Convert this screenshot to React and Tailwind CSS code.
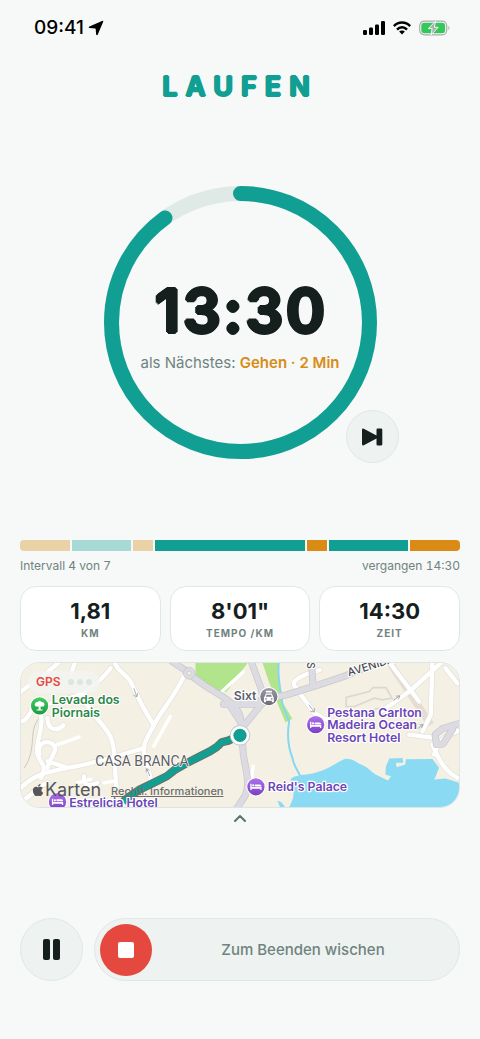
import { FaApple } from "react-icons/fa";

const TOTAL_PROGRESS = 0.9;
const RING_RADIUS = 129;
const RING_LENGTH = 2 * Math.PI * RING_RADIUS;

const intervals = [
  { minutes: 5, color: "bg-[#ebd2a6]" },
  { minutes: 6, color: "bg-[#a7dad4]" },
  { minutes: 2, color: "bg-[#ebd2a6]" },
  { minutes: 15, color: "bg-[#109f92]" },
  { minutes: 2, color: "bg-[#d98b16]" },
  { minutes: 8, color: "bg-[#109f92]" },
  { minutes: 5, color: "bg-[#d98b16]" },
];

const stats = [
  { value: "1,81", label: "KM" },
  { value: "8'01\"", label: "TEMPO /KM" },
  { value: "14:30", label: "ZEIT" },
];

// minor streets, drawn white with a thin casing
const streets = [
  "M310 15 C318 50 345 55 360 80 C375 110 385 140 430 212",
  "M520 65 C490 130 450 170 430 212 C410 250 395 270 402 300 C410 340 420 350 425 400",
  "M205 110 C230 160 260 190 290 230 C320 270 310 350 318 400",
  "M30 400 C80 350 130 350 170 340 C240 330 300 310 402 280",
  "M30 440 C60 430 70 400 110 385",
  "M90 180 C100 230 70 260 80 300 C90 330 110 330 90 370",
  "M110 340 C120 300 150 280 120 265 C90 255 80 280 85 300",
  "M110 190 C110 230 140 230 158 212",
  "M60 170 C50 190 40 200 30 200",
  "M300 40 C270 80 250 90 225 110 C200 130 90 150 60 165",
  "M150 15 C120 50 80 70 30 110",
  "M195 15 L180 60",
  "M220 365 C215 400 240 395 260 385",
  "M110 320 L170 340",
  "M870 115 L915 175 L960 200",
  "M930 45 C840 70 840 90 870 105",
  "M1135 15 L1230 140",
  "M1115 170 L1200 110 L1305 15",
  "M1270 15 L1265 180 L1240 230",
  "M1200 240 L1275 250",
  "M1270 270 C1290 320 1310 350 1345 370",
  "M1345 230 C1320 240 1290 250 1275 300",
  "M1310 40 L1345 85",
];

const lanes = [
  "M480 185 L430 275",
  "M140 270 L205 247",
  "M630 115 L700 50",
  "M200 385 L240 375",
  "M280 385 L310 380",
  "M730 335 L725 370",
];

const mainRoads = [
  "M480 15 C505 35 520 40 537 55 C590 110 680 130 692 190 L700 300 C708 350 722 390 705 425 L675 470",
  "M640 148 L755 148 L700 215",
  "M700 215 L655 145",
  "M722 15 L755 105 L760 145",
  "M740 140 L830 120 L920 92 L1010 62 L1130 15",
  "M905 15 L910 92",
  "M1355 205 L1300 222 L1278 240 L1282 270 L1302 268 L1330 225",
];

const routePath =
  "M338 442 L352 430 L385 407 L430 385 L470 365 L492 347 L525 328 L570 305 L600 290 L620 277 L635 263 L655 258 L690 242";

function StatusBar() {
  return (
    <div className="flex items-center justify-between pt-4 pr-[30px] pl-[34px]">
      <div className="flex items-center gap-1">
        <span className="text-[19px] leading-6 font-medium text-black">09:41</span>
        <svg viewBox="0 0 16 16" className="size-4">
          <path
            d="M15.200 1.800 L9.800 14.400 Q8.800 16 8.100 14.200 L7.700 9 Q7.600 8.500 7.100 8.400 L1.600 8.100 Q-.2 7.500 1.400 6.500 L14 .9 Q15.800 .3 15.200 1.800Z"
            fill="#000"
          />
        </svg>
      </div>
      <div className="flex items-center gap-2">
        <svg viewBox="0 0 22 14" className="h-[14px] w-[22px]">
          <rect x="0" y="9" width="4" height="5" rx="1.3" />
          <rect x="6" y="6.5" width="4" height="7.5" rx="1.3" />
          <rect x="12" y="3.5" width="4" height="10.5" rx="1.3" />
          <rect x="18" y="0" width="4" height="14" rx="1.3" />
        </svg>
        <svg viewBox="0 0 18 14" className="h-[14px] w-[18px]">
          <g fill="none" stroke="#000" strokeWidth="2.5">
            <path d="M.8 5.1 C5.3 .3 12.7 .3 17.2 5.1" />
            <path d="M4 8.6 C6.8 5.6 11.2 5.6 14 8.6" />
          </g>
          <path d="M9 9.400 C10.300 9.400 11.200 9.900 11.900 10.600 L9 13.600 L6.100 10.600 C6.800 9.900 7.700 9.400 9 9.400Z" />
        </svg>
        <svg viewBox="0 0 31 16" className="h-4 w-[31px]">
          <rect x=".7" y="1.200" width="27" height="13.600" rx="4.500" fill="none" stroke="#a9adab" strokeWidth="1.200" />
          <rect x="2.300" y="2.800" width="23.800" height="10.400" rx="3" fill="#34c759" />
          <path d="M29.400 6 C30.800 6.500 30.800 9.500 29.400 10Z" fill="#a9adab" />
          <path
            d="M16.600 1 L9.300 8.600 H13.200 L12 15 L19.200 7.300 H15.300Z"
            fill="#a9adab"
            stroke="#f6f9f8"
            strokeWidth="1"
            strokeLinejoin="round"
          />
        </svg>
      </div>
    </div>
  );
}

function TimerRing() {
  return (
    <div className="relative mx-auto mt-[81px] flex size-[273px] flex-col items-center justify-center">
      <svg viewBox="0 0 273 273" className="absolute inset-0 size-full" fill="none" strokeWidth="15">
        <circle cx="136.5" cy="136.5" r={RING_RADIUS} stroke="#dfe9e6" />
        <circle
          cx="136.5"
          cy="136.5"
          r={RING_RADIUS}
          stroke="#109f92"
          strokeLinecap="round"
          strokeDasharray={`${RING_LENGTH * TOTAL_PROGRESS} ${RING_LENGTH}`}
          transform="rotate(-90 136.5 136.5)"
        />
      </svg>
      {/* the shadows thicken the digits and round their corners */}
      <div className="relative mt-1 pl-[3px] text-[59px] leading-[72px] font-semibold tracking-[3px] text-[#15201e] [text-shadow:2px_0_#15201e,-2px_0_#15201e,0_2px_#15201e,0_-2px_#15201e,1px_1px_#15201e,-1px_1px_#15201e,1px_-1px_#15201e,-1px_-1px_#15201e]">
        13:30
      </div>
      <p className="relative mt-1 text-[15px] leading-6 whitespace-nowrap text-[#71837e]">
        als Nächstes: <span className="font-semibold text-[#d98b16]">Gehen · 2 Min</span>
      </p>
      <button
        aria-label="Intervall überspringen"
        className="absolute -right-[22px] -bottom-1 flex size-[53px] items-center justify-center rounded-full border border-[#e1e8e6] bg-[#eef2f1]"
      >
        <svg viewBox="0 0 22 18" className="h-[18px] w-[22px]" fill="#15201e">
          <path d="M1 2 Q1 0 2.800 .8 L15.500 7.600 V1.800 Q15.500 .5 16.800 .5 H20 Q21.300 .5 21.300 1.800 V16.200 Q21.300 17.500 20 17.500 H16.800 Q15.500 17.500 15.500 16.200 V10.400 L2.800 17.200 Q1 18 1 16Z" />
        </svg>
      </button>
    </div>
  );
}

function Pin({ x, y, fill, children }) {
  return (
    <g transform={`translate(${x} ${y})`}>
      <circle r="29" fill="#fff" />
      <circle r="26" fill={fill} />
      <g fill="#fff">{children}</g>
    </g>
  );
}

function HotelPin({ x, y }) {
  return (
    <Pin x={x} y={y} fill="url(#hotel)">
      <path d="M-17 -9 H-13 V1 H17 V10 H13 V6 H-13 V10 H-17Z" />
      <circle cx="-8" cy="-4" r="3.500" />
      <path d="M-3 -7 H11 Q17 -7 17 -1 H-3Z" />
    </Pin>
  );
}

function MapCard() {
  return (
    <div className="relative mt-[11px] overflow-hidden rounded-[20px] border border-[#dde6e3]">
      <svg viewBox="30 24 1320 435" className="block w-full" role="img" aria-label="Karte der Laufstrecke">
        <defs>
          <linearGradient id="hotel" x1="0" y1="0" x2="0" y2="1">
            <stop offset="0" stopColor="#ad72ec" />
            <stop offset="1" stopColor="#7b3fc4" />
          </linearGradient>
          <linearGradient id="park" x1="0" y1="0" x2="0" y2="1">
            <stop offset="0" stopColor="#43cf63" />
            <stop offset="1" stopColor="#1c9a43" />
          </linearGradient>
          <linearGradient id="rental" x1="0" y1="0" x2="0" y2="1">
            <stop offset="0" stopColor="#9a9ba6" />
            <stop offset="1" stopColor="#696a76" />
          </linearGradient>
        </defs>
        <rect x="30" y="21" width="1320" height="441" fill="#f4f0e4" />
        <path d="M555 15 L557 75 C580 105 620 120 650 110 L715 21Z" fill="#b2e48b" />
        <path d="M755 15 H806 C800 60 818 110 820 145 L848 192 L827 203 L805 150 L775 75Z" fill="#b2e48b" />
        <path d="M1140 21 L1265 210" stroke="#e5ddcf" strokeWidth="22" fill="none" />
        <path
          d="M808 15 C800 60 812 100 818 150 L838 200 C830 250 840 290 848 310 C852 335 865 350 872 365"
          fill="none"
          stroke="#85d8f2"
          strokeWidth="6"
        />
        <path
          d="M836 462 C845 445 855 430 850 400 C840 380 838 372 855 366 C880 358 900 362 930 350 C950 347 970 330 1005 313 C1030 310 1040 325 1060 332 C1080 340 1090 358 1105 363 L1136 378 L1145 365 L1128 360 L1130 335 L1140 312 L1180 310 L1182 325 L1160 325 L1162 338 L1188 330 L1190 314 L1270 313 L1290 340 L1280 365 L1275 375 L1310 372 L1350 385 V462Z"
          fill="#8bdaf4"
        />
        <path d="M803 440 Q815 438 828 462 H812Z" fill="#8bdaf4" />
        <path d="M40 340 C80 280 50 230 85 190" fill="none" stroke="#c9c7c1" strokeWidth="3" />
        <g fill="none" stroke="#dbd8d0" strokeWidth="5">
          <path d="M1010 155 V128 L1080 110 L1090 98 H1130 L1148 130 L1120 135 L1095 130 L1035 155Z" />
          <path d="M1060 175 L1110 160 L1120 185" />
        </g>
        <g fill="none" strokeLinecap="round" strokeLinejoin="round">
          {streets.map((d) => (
            <path key={d} d={d} stroke="#e3e0da" strokeWidth="17" />
          ))}
          {lanes.map((d) => (
            <path key={d} d={d} stroke="#fff" strokeWidth="10" />
          ))}
          {streets.map((d) => (
            <path key={d} d={d} stroke="#fff" strokeWidth="13" />
          ))}
          {mainRoads.map((d) => (
            <path key={d} d={d} stroke="#c6c6cd" strokeWidth="21" />
          ))}
          {mainRoads.map((d) => (
            <path key={d} d={d} stroke="#dbdbe1" strokeWidth="17" />
          ))}
        </g>
        <circle cx="537" cy="55" r="18" fill="#dbdbe1" stroke="#c6c6cd" strokeWidth="2" />
        <circle cx="537" cy="55" r="6" fill="#f4f0e4" stroke="#c6c6cd" strokeWidth="2" />
        <g fill="none" stroke="#9c9da5" strokeWidth="2.500">
          <path d="M370 100 L379 126 M379 126 L369 121 M379 126 L382 114" />
          <path d="M418 365 L409 342 M409 342 L407 353 M409 342 L418 348" />
          <path d="M898 150 L914 172 M914 172 L902 169 M914 172 L914 160" />
          <path d="M1152 137 L1172 123 M1172 123 L1160 124 M1172 123 L1167 134" />
          <path d="M1225 222 L1242 210 M1242 210 L1231 210 M1242 210 L1237 220" />
        </g>

        {/* Street names */}
        <g
          fill="#4a4a50"
          stroke="#fff"
          strokeWidth="7"
          strokeLinejoin="round"
          paintOrder="stroke"
          fontWeight="500"
        >
          <text transform="translate(1018 64) rotate(-17)" fontSize="33">
            AVENIDA
          </text>
          <text transform="translate(892 22) rotate(90)" fontSize="30">
            S
          </text>
        </g>

        {/* Route */}
        <g fill="none" strokeLinejoin="round">
          <path d={routePath} stroke="#65756b" strokeWidth="25" />
          <path d={routePath} stroke="#109f92" strokeWidth="18" />
        </g>

        {/* Place names */}
        <g
          fill="#6a45b8"
          stroke="#fff"
          strokeWidth="7"
          strokeLinejoin="round"
          paintOrder="stroke"
          fontSize="37"
          fontWeight="600"
        >
          <text
            x="254"
            y="335"
            fill="#5f5f64"
            fontFamily="Roboto, sans-serif"
            fontWeight="400"
            fontSize="42"
            strokeWidth="4"
          >
            CASA BRANCA
          </text>
          <text x="671" y="137" fill="#5b5e72">
            Sixt
          </text>
          <g fill="#2b8748">
            <text x="123" y="149">Levada dos</text>
            <text x="123" y="186">Piornais</text>
          </g>
          <text x="953" y="187">Pestana Carlton</text>
          <text x="953" y="224">Madeira Ocean</text>
          <text x="953" y="262">Resort Hotel</text>
          <text x="774" y="411">Reid's Palace</text>
          <text x="175" y="459">Estrelicia Hotel</text>
        </g>

        <circle cx="690" cy="242" r="31" fill="#c3cac7" />
        <circle cx="690" cy="242" r="28" fill="#fff" />
        <circle cx="690" cy="242" r="20" fill="#109f92" />

        <Pin x={86} y={153} fill="url(#park)">
          <path d="M-12 -10 L-5 -12 L0 -15 L5 -12 L12 -10 L15 -4 L12 2 H3 V11 H9 V14 H-9 V11 H-3 V2 H-12 L-15 -4Z" />
        </Pin>
        <Pin x={777} y={125} fill="url(#rental)">
          <path d="M-9 -17 H9 V-12 H-9Z" />
          <path
            fillRule="evenodd"
            d="M-9 -9 H9 L13 1 L15 4 V17 H9 V13 H-9 V17 H-15 V4 L-13 1Z M-7 -5 L-9 1 H9 L7 -5Z M-11 5 V9 H-6 V5Z M6 5 V9 H11 V5Z"
          />
        </Pin>
        <HotelPin x={918} y={210} />
        <HotelPin x={738} y={397} />
        <HotelPin x={140} y={442} />
      </svg>

      <div className="absolute top-2 left-[7px] flex items-center gap-[3px] rounded-full bg-[#f3f4f1]/80 px-2 py-[3px]">
        <span className="text-[12px] leading-4 font-semibold text-[#e5483e]">GPS</span>
        <span className="ml-1 size-[6px] rounded-full bg-[#dbe7e5]" />
        <span className="size-[6px] rounded-full bg-[#dbe7e5]" />
        <span className="size-[6px] rounded-full bg-[#dbe7e5]" />
      </div>
      <div className="absolute bottom-[5px] left-[10px] flex items-center text-[18px] leading-6 text-[#55575a]">
        <FaApple className="size-[14px]" />
        Karten
      </div>
      <a
        href="#rechtliches"
        className="absolute bottom-2 left-[90px] text-[11px] leading-4 font-medium text-[#6d6e6c] underline"
      >
        Rechtl. Informationen
      </a>
    </div>
  );
}

export default function App() {
  return (
    <div className="flex min-h-screen flex-col bg-[#f6f9f8] font-[Inter,sans-serif] text-[#15201e]">
      <StatusBar />

      <main className="flex flex-1 flex-col px-5 pb-[58px]">
        <h1 className="mt-[29px] text-center text-[27px] leading-9 font-bold tracking-[8px] text-[#109f92] [text-shadow:1px_0_#109f92,-1px_0_#109f92,0_1px_#109f92,0_-1px_#109f92]">
          LAUFEN
        </h1>

        <TimerRing />

        {/* Interval timeline */}
        <div className="mt-[81px] flex h-[11px] gap-[2px] overflow-hidden rounded-[4px]">
          {intervals.map((part, i) => (
            <div key={i} className={part.color} style={{ flexGrow: part.minutes, flexBasis: 0 }} />
          ))}
        </div>
        <div className="mt-[5px] flex justify-between text-[12px] leading-5 text-[#71837e] tabular-nums">
          <span>Intervall 4 von 7</span>
          <span>vergangen 14:30</span>
        </div>

        {/* Stats */}
        <div className="mt-[10px] grid grid-cols-3 gap-[9px]">
          {stats.map((s) => (
            <div
              key={s.label}
              className="flex flex-col items-center rounded-[16px] border border-[#e0e8e5] bg-white pt-[10px] pb-[9px]"
            >
              <span className="text-[22px] leading-7 font-bold">{s.value}</span>
              <span className="text-[10px] leading-4 font-bold tracking-[1px] text-[#71837e]">{s.label}</span>
            </div>
          ))}
        </div>

        <MapCard />

        <button aria-label="Karte vergrößern" className="mx-auto mt-1 flex h-3 w-6 items-center justify-center">
          <svg viewBox="0 0 12 8" className="h-2 w-3" fill="none" stroke="#5d726c" strokeWidth="2">
            <path d="M1 7 L6 2 L11 7" strokeLinecap="round" strokeLinejoin="round" />
          </svg>
        </button>

        {/* Controls */}
        <div className="mt-auto flex gap-[11px]">
          <button
            aria-label="Pause"
            className="flex size-[63px] shrink-0 items-center justify-center gap-[3px] rounded-full border border-[#e0e8e5] bg-[#eef2f1]"
          >
            <span className="h-[21px] w-[7px] rounded-[2px] bg-[#15201e]" />
            <span className="h-[21px] w-[7px] rounded-[2px] bg-[#15201e]" />
          </button>
          <div className="flex h-[63px] flex-1 items-center rounded-full border border-[#e0e8e5] bg-[#eef2f1] px-[5px]">
            <button
              aria-label="Beenden"
              className="flex size-[52px] shrink-0 items-center justify-center rounded-full bg-[#e5483e]"
            >
              <span className="size-4 rounded-[2px] bg-white" />
            </button>
            <span className="flex-1 text-center text-[15px] leading-6 font-medium text-[#71837e]">
              Zum Beenden wischen
            </span>
          </div>
        </div>
      </main>
    </div>
  );
}
